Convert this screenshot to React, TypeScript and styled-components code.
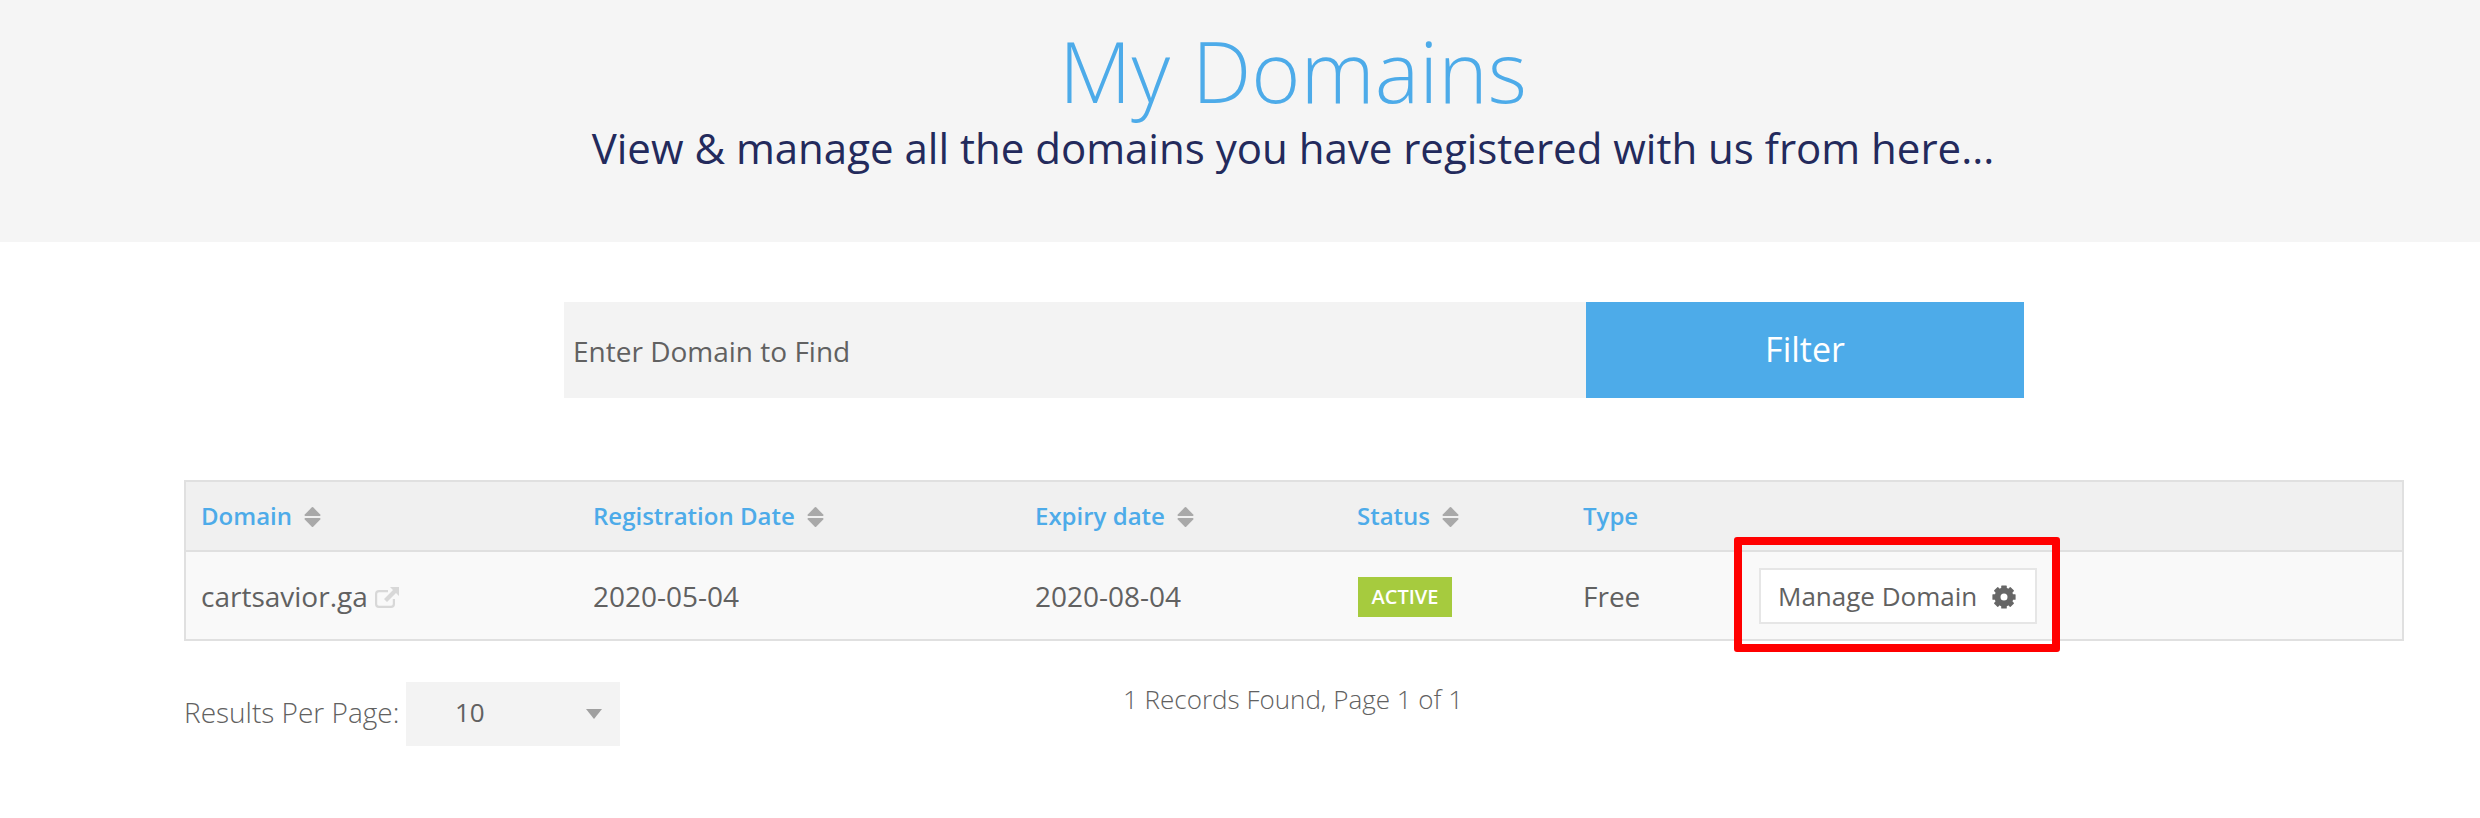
import React from "react";
import styled, { createGlobalStyle } from "styled-components";

const GlobalStyle = createGlobalStyle`
  html, body {
    margin: 0;
    padding: 0;
    background: #fff;
    font-family: "Open Sans", sans-serif;
    color: #616161;
  }
`;

const Hero = styled.header`
  height: 242px;
  background: #f5f5f5;
  text-align: center;
  padding: 27px 0 0 106px;
  box-sizing: border-box;
`;

const Title = styled.h1`
  margin: 0;
  font-size: 84px;
  line-height: 88px;
  font-weight: 300;
  color: #4dabe9;
`;

const Subtitle = styled.p`
  margin: 4px 0 0;
  font-size: 42px;
  line-height: 58px;
  font-weight: 400;
  color: #232a5c;
`;

const FilterRow = styled.form`
  display: flex;
  width: 1460px;
  height: 96px;
  margin: 60px 0 0 564px;
`;

const FilterInput = styled.div`
  width: 1022px;
  background: #f3f3f3;
  display: flex;
  align-items: center;
  padding: 2px 0 0 9px;
  box-sizing: border-box;
  font-size: 28px;
  color: #616161;
`;

const FilterButton = styled.button`
  flex: 1;
  border: 0;
  background: #4dabe9;
  color: #fff;
  font-family: inherit;
  font-size: 34px;
  padding: 0 0 3px;
`;

const TableWrap = styled.div`
  position: relative;
  width: 2220px;
  margin: 82px 0 0 184px;
`;

const Table = styled.table`
  width: 100%;
  border-collapse: collapse;
  table-layout: fixed;
  border: 2px solid #e0e0e0;
`;

const HeadRow = styled.tr`
  height: 70px;
  background: #f0f0f0;
  border-bottom: 2px solid #e0e0e0;
`;

const BodyRow = styled.tr`
  height: 89px;
  background: #f9f9f9;
`;

const Th = styled.th<{ $width?: number }>`
  width: ${(p) => (p.$width ? `${p.$width}px` : "auto")};
  padding: 0 0 2px 16px;
  text-align: left;
  font-size: 24px;
  font-weight: 600;
  color: #4dabe9;
  white-space: nowrap;
  box-sizing: border-box;
  &:first-child {
    padding-left: 15px;
  }
`;

const SortSvg = styled.svg`
  width: 17px;
  height: 22px;
  margin-left: 12px;
  vertical-align: -3px;
  fill: #a9a9a9;
  stroke: #a9a9a9;
  stroke-width: 2;
  stroke-linejoin: round;
`;

const SortIcon = () => (
  <SortSvg viewBox="0 0 18 22">
    <path d="M9 1.5 16.5 9h-15z" />
    <path d="M1.5 13h15L9 20.5z" />
  </SortSvg>
);

const Td = styled.td`
  padding: 0 0 0 16px;
  font-size: 28px;
  color: #616161;
  white-space: nowrap;
  box-sizing: border-box;
  &:first-child {
    padding-left: 15px;
  }
`;

const LinkIcon = styled.svg`
  width: 24px;
  height: 21px;
  margin-left: 7px;
  vertical-align: -1px;
  fill: #d8d8d8;
`;

const Badge = styled.span`
  display: inline-flex;
  align-items: center;
  justify-content: center;
  width: 94px;
  height: 40px;
  margin-left: 1px;
  background: #a6cb3e;
  color: #fff;
  font-size: 20px;
  font-weight: 600;
  vertical-align: middle;
`;

const ManageButton = styled.button`
  display: inline-flex;
  align-items: center;
  width: 278px;
  height: 56px;
  margin-left: 24px;
  padding: 0 0 0 17px;
  box-sizing: border-box;
  border: 2px solid #e6e6e6;
  background: #fff;
  font-family: inherit;
  font-size: 26px;
  color: #616161;
  white-space: nowrap;
`;

const GearSvg = styled.svg`
  width: 24px;
  height: 24px;
  margin: 2px 0 0 15px;
  fill: #666;
`;

const GearIcon = () => (
  <GearSvg viewBox="0 0 24 24">
    <circle cx="12" cy="12" r="6.5" fill="none" stroke="#666" strokeWidth="6" />
    {[0, 45, 90, 135, 180, 225, 270, 315].map((deg) => (
      <rect key={deg} x="9.2" y="0.4" width="5.6" height="4" rx="0.6" transform={`rotate(${deg} 12 12)`} />
    ))}
  </GearSvg>
);

const Highlight = styled.div`
  position: absolute;
  left: 1550px;
  top: 57px;
  width: 326px;
  height: 115px;
  box-sizing: border-box;
  border: 8px solid #ff0000;
  border-radius: 3px;
  pointer-events: none;
`;

const Footer = styled.div`
  position: relative;
  width: 2220px;
  margin: 41px 0 0 184px;
  display: flex;
  align-items: center;
  height: 64px;
`;

const PerPageLabel = styled.span`
  font-size: 28px;
  font-weight: 300;
  color: #616161;
  width: 222px;
  padding-bottom: 4px;
  white-space: nowrap;
`;

const PerPageSelect = styled.div`
  position: relative;
  width: 214px;
  height: 64px;
  background: #f3f3f3;
  display: flex;
  align-items: center;
  padding: 0 0 4px 49px;
  box-sizing: border-box;
  font-size: 26px;
  color: #616161;
  &::after {
    content: "";
    position: absolute;
    right: 18px;
    top: 27px;
    border-left: 8px solid transparent;
    border-right: 8px solid transparent;
    border-top: 10px solid #a0a0a0;
  }
`;

const RecordCount = styled.div`
  position: absolute;
  left: 939px;
  top: -1px;
  font-size: 26px;
  font-weight: 300;
  color: #616161;
  white-space: nowrap;
`;

export default function App() {
  return (
    <>
      <GlobalStyle />
      <Hero>
        <Title>My Domains</Title>
        <Subtitle>View &amp; manage all the domains you have registered with us from here...</Subtitle>
      </Hero>
      <FilterRow>
        <FilterInput>Enter Domain to Find</FilterInput>
        <FilterButton type="button">Filter</FilterButton>
      </FilterRow>
      <TableWrap>
        <Table>
          <thead>
            <HeadRow>
              <Th $width={392}>Domain<SortIcon /></Th>
              <Th $width={442}>Registration Date<SortIcon /></Th>
              <Th $width={322}>Expiry date<SortIcon /></Th>
              <Th $width={226}>Status<SortIcon /></Th>
              <Th $width={152}>Type</Th>
              <Th />
            </HeadRow>
          </thead>
          <tbody>
            <BodyRow>
              <Td>
                cartsavior.ga
                <LinkIcon viewBox="0 0 24 21">
                  <path d="M20 12v5a4 4 0 0 1-4 4H4a4 4 0 0 1-4-4V7a4 4 0 0 1 4-4h9v2.2H4A1.8 1.8 0 0 0 2.2 7v10A1.8 1.8 0 0 0 4 18.800h12a1.800 1.800 0 0 0 1.800-1.800v-5z" />
                  <path d="M15 0h9v9l-3-3-9 9-3-3 9-9z" />
                </LinkIcon>
              </Td>
              <Td>2020-05-04</Td>
              <Td>2020-08-04</Td>
              <Td><Badge>ACTIVE</Badge></Td>
              <Td>Free</Td>
              <Td>
                <ManageButton type="button">Manage Domain<GearIcon /></ManageButton>
              </Td>
            </BodyRow>
          </tbody>
        </Table>
        <Highlight />
      </TableWrap>
      <Footer>
        <PerPageLabel>Results Per Page:</PerPageLabel>
        <PerPageSelect>10</PerPageSelect>
        <RecordCount>1 Records Found, Page 1 of 1</RecordCount>
      </Footer>
    </>
  );
}
